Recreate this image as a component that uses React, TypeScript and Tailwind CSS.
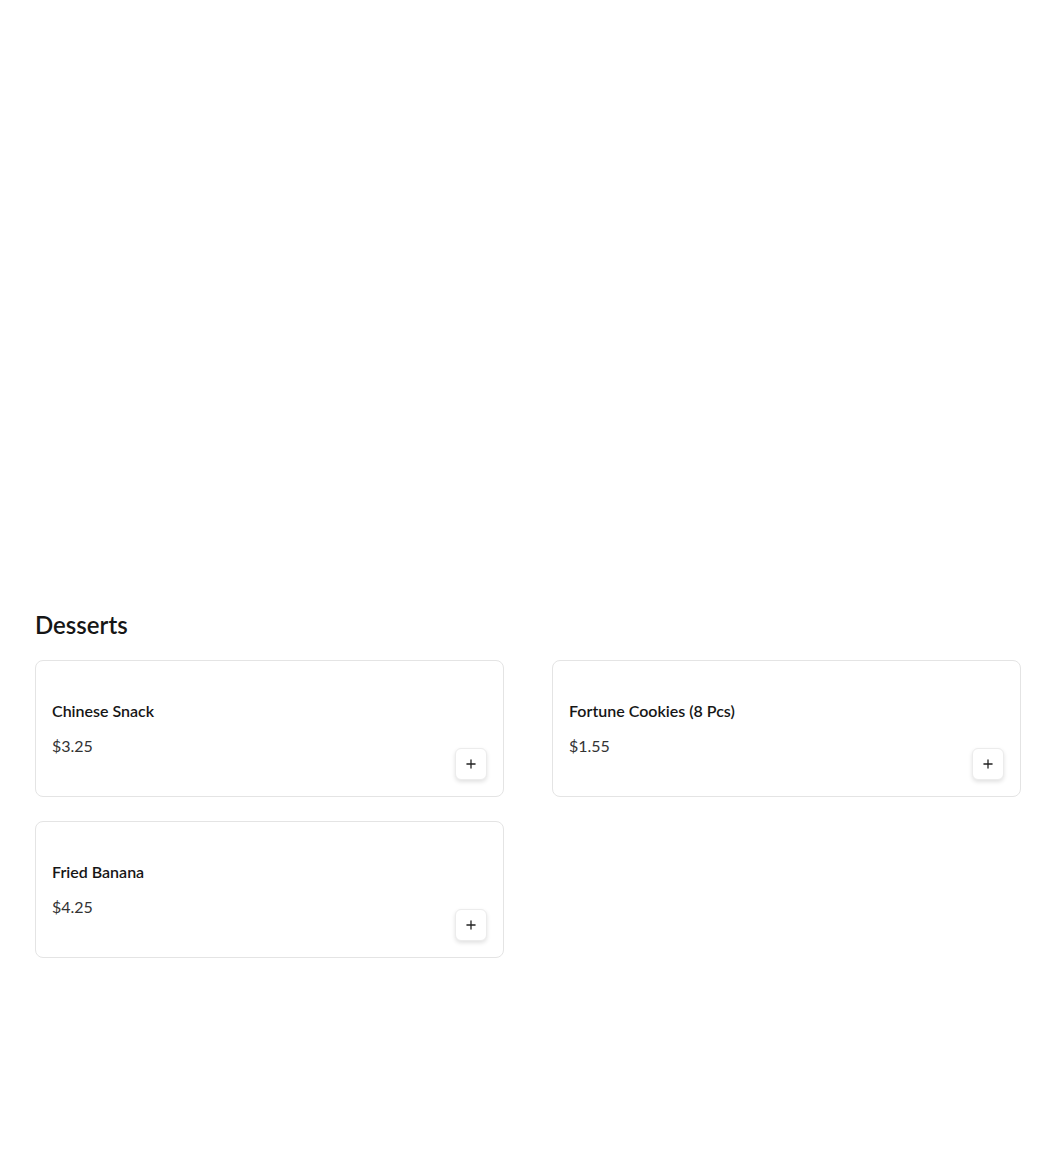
import React from 'react';
import { Plus } from 'lucide-react';

type Item = { name: string; price: number };

const desserts: Item[] = [
  { name: 'Chinese Snack', price: 3.25 },
  { name: 'Fortune Cookies (8 Pcs)', price: 1.55 },
  { name: 'Fried Banana', price: 4.25 },
];

const MenuCard: React.FC<{ item: Item }> = ({ item }) => (
  <div className="flex h-[137px] items-center justify-between rounded-lg border border-[#e4e4e4] bg-white px-4">
    <div className="flex flex-col">
      <h3 className="text-[16px] font-semibold leading-[22px] text-[#161616]">{item.name}</h3>
      <p className="mt-3 text-[16px] font-normal leading-6 text-[#333]">${item.price.toFixed(2)}</p>
    </div>
    <button className="mb-4 flex h-8 w-8 self-end items-center justify-center rounded-md border border-[#ececec] bg-white shadow-[0_2px_4px_rgba(0,0,0,0.12)]">
      <Plus size={14} strokeWidth={2.2} className="text-[#222]" />
    </button>
  </div>
);

export default function App() {
  return (
    <div className="min-h-[1170px] bg-white px-[35px] pt-[612px] pb-10 font-['Lato','Liberation_Sans',sans-serif]">
      <h2 className="mb-[22px] text-[24px] font-semibold leading-[26px] text-[#161616]">Desserts</h2>
      <div className="grid w-[986px] grid-cols-2 gap-x-[48px] gap-y-6">
        {desserts.map(d => (
          <MenuCard key={d.name} item={d} />
        ))}
      </div>
    </div>
  );
}
